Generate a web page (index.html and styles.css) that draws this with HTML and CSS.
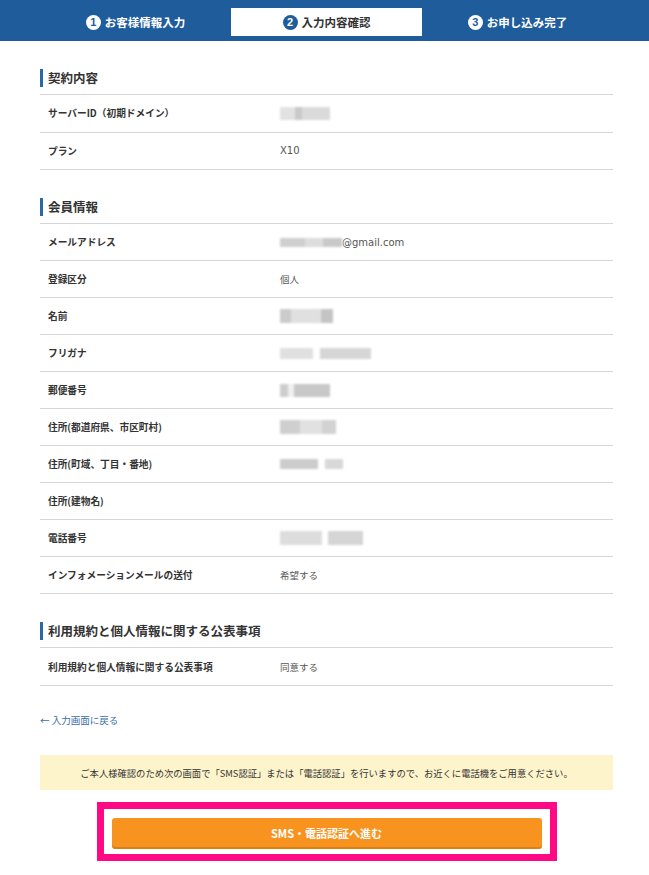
FILE: index.html
```html
<!DOCTYPE html>
<html lang="ja">
<head>
<meta charset="utf-8">
<title>入力内容確認</title>
<link rel="stylesheet" href="styles.css">
</head>
<body>
<div class="steps">
  <div class="steps-inner">
    <div class="step"><span class="num">1</span><span class="step-label">お客様情報入力</span></div>
    <div class="step active"><span class="num">2</span><span class="step-label">入力内容確認</span></div>
    <div class="step"><span class="num">3</span><span class="step-label">お申し込み完了</span></div>
  </div>
</div>

<main class="container">
  <section class="section section-contract">
    <h2 class="section-title"><span class="title-text">契約内容</span></h2>
    <div class="row"><div class="label">サーバーID（初期ドメイン）</div><div class="value"><span class="blur b-server"></span></div></div>
    <div class="row"><div class="label">プラン</div><div class="value"><span class="latin">X10</span></div></div>
  </section>

  <section class="section">
    <h2 class="section-title"><span class="title-text">会員情報</span></h2>
    <div class="row"><div class="label">メールアドレス</div><div class="value"><span class="blur b-mail"></span><span class="latin">@gmail.com</span></div></div>
    <div class="row"><div class="label">登録区分</div><div class="value">個人</div></div>
    <div class="row"><div class="label">名前</div><div class="value"><span class="blur b-name"></span></div></div>
    <div class="row"><div class="label">フリガナ</div><div class="value"><span class="blur b-kana"></span></div></div>
    <div class="row"><div class="label">郵便番号</div><div class="value"><span class="blur b-zip"></span></div></div>
    <div class="row"><div class="label">住所(都道府県、市区町村)</div><div class="value"><span class="blur b-pref"></span></div></div>
    <div class="row"><div class="label">住所(町域、丁目・番地)</div><div class="value"><span class="blur b-town"></span></div></div>
    <div class="row"><div class="label">住所(建物名)</div><div class="value"></div></div>
    <div class="row"><div class="label">電話番号</div><div class="value"><span class="blur b-tel"></span></div></div>
    <div class="row"><div class="label">インフォメーションメールの送付</div><div class="value">希望する</div></div>
  </section>

  <section class="section">
    <h2 class="section-title"><span class="title-text">利用規約と個人情報に関する公表事項</span></h2>
    <div class="row tall"><div class="label">利用規約と個人情報に関する公表事項</div><div class="value">同意する</div></div>
  </section>

  <a class="back" href="#">← 入力画面に戻る</a>

  <p class="notice">ご本人様確認のため次の画面で「SMS認証」または「電話認証」を行いますので、お近くに電話機をご用意ください。</p>

  <div class="highlight">
    <button class="next" type="button">SMS・電話認証へ進む</button>
  </div>
</main>
</body>
</html>
```

FILE: styles.css
```css
* { box-sizing: border-box; }

body {
  margin: 0;
  background: #ffffff;
  color: #333333;
  font-family: "Noto Sans CJK JP", "Noto Sans", sans-serif;
}

.steps {
  background: #1f5c9c;
  height: 41px;
}

.steps-inner {
  width: 573px;
  margin-left: 40px;
  display: grid;
  grid-template-columns: repeat(3, 1fr);
  padding-top: 8px;
}

.step {
  height: 28px;
  display: flex;
  align-items: center;
  justify-content: center;
  gap: 4px;
  color: #ffffff;
  font-size: 11.5px;
  font-weight: 700;
}

.step .num {
  width: 15px;
  height: 15px;
  border-radius: 50%;
  background: #ffffff;
  color: #1f5c9c;
  font-family: "Liberation Sans", sans-serif;
  font-size: 11px;
  font-weight: 700;
  display: flex;
  align-items: center;
  justify-content: center;
  line-height: 1;
}

.step.active {
  background: #ffffff;
  color: #333333;
}

.step.active .num {
  background: #1f5c9c;
  color: #ffffff;
}

.container {
  width: 573px;
  margin-left: 40px;
}

.section-title {
  margin: 0;
  padding: 28px 0 7px;
  border-bottom: 1px solid #d6d6d6;
  font-size: 12.5px;
  font-weight: 700;
  line-height: 18px;
  color: #333333;
}

.title-text {
  display: block;
  border-left: 3px solid #2a68a6;
  padding-left: 5px;
}

.row {
  display: flex;
  align-items: center;
  height: 37px;
  border-bottom: 1px solid #d6d6d6;
  padding-left: 8px;
}

.section-contract .row { height: 37.5px; }

.row.tall { height: 38px; }

.label {
  width: 232px;
  flex: none;
  font-size: 9.7px;
  font-weight: 700;
  color: #333333;
}

.value {
  font-size: 9.5px;
  color: #555555;
  display: flex;
  align-items: center;
}

.latin {
  font-family: "DejaVu Sans", sans-serif;
  font-size: 10px;
}

.blur {
  display: inline-block;
  height: 13px;
  background: #d4d4d4;
  filter: blur(1.2px);
}

.b-server { width: 50px; background: linear-gradient(90deg, #e2e2e2 0 30%, #c9c9c9 30% 45%, #dadada 45%); }
.b-mail { width: 62px; height: 9px; background: linear-gradient(90deg, #cfcfcf 0 40%, #dddddd 40% 70%, #c9c9c9 70%); }
.b-name { width: 53px; height: 14px; background: linear-gradient(90deg, #cbcbcb 0 20%, #e0e0e0 20% 78%, #c4c4c4 78%); }
.b-kana { width: 91px; height: 11px; background: linear-gradient(90deg, #e0e0e0 0 36%, #ffffff 36% 44%, #d6d6d6 44%); }
.b-zip { width: 50px; background: linear-gradient(90deg, #cdcdcd 0 16%, #f0f0f0 16% 28%, #c8c8c8 28%); }
.b-pref { width: 56px; height: 14px; background: linear-gradient(90deg, #cfcfcf 0 35%, #e1e1e1 35% 75%, #d2d2d2 75%); }
.b-town { width: 63px; height: 10px; background: linear-gradient(90deg, #cccccc 0 60%, #ffffff 60% 72%, #d8d8d8 72%); }
.b-tel { width: 83px; height: 14px; background: linear-gradient(90deg, #dddddd 0 50%, #ffffff 50% 58%, #d5d5d5 58%); }

.back {
  display: block;
  margin-top: 27px;
  line-height: 14px;
  font-size: 9.5px;
  color: #3a6ea6;
  text-decoration: none;
}

.notice {
  margin: 28px 0 0;
  height: 35px;
  background: #fdf4cc;
  display: flex;
  align-items: center;
  justify-content: center;
  font-size: 9.3px;
  color: #333333;
}

.highlight {
  width: 460px;
  margin: 12px auto 0;
  border: 7px solid #ff0a84;
  padding: 9px 8px 7px;
  background: #ffffff;
}

.next {
  display: block;
  width: 100%;
  height: 29px;
  border: 0;
  border-radius: 3px;
  background: #f7931e;
  box-shadow: 0 2px 0 #d98016;
  color: #ffffff;
  font-family: "Noto Sans CJK JP", sans-serif;
  font-size: 11px;
  font-weight: 700;
}
```
